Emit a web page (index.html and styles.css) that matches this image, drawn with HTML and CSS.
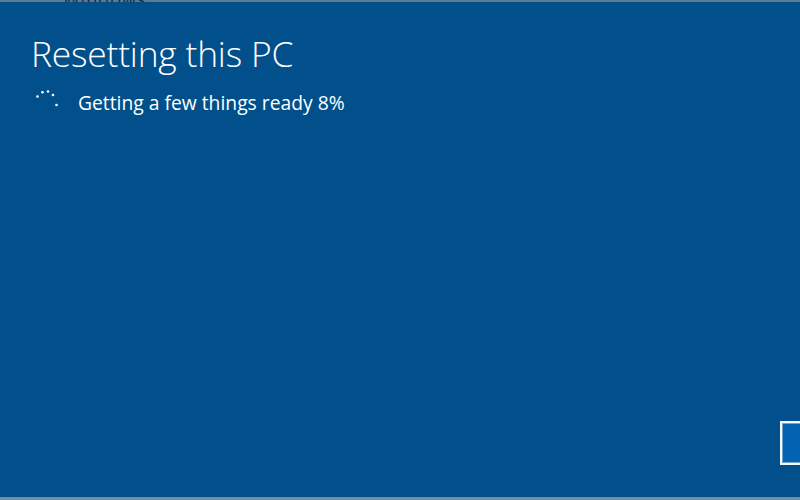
FILE: index.html
```html
<!DOCTYPE html>
<html>
<head>
<meta charset="utf-8">
<link rel="stylesheet" href="styles.css">
</head>
<body>
<div class="screen">
  <div class="topstrip"><span class="cut">Windows</span></div>
  <main class="content">
    <h1 class="title">Resetting this PC</h1>
    <div class="status">
      <svg class="spinner" width="24" height="18" viewBox="0 0 24 18">
        <circle cx="2.5" cy="6.5" r="1.3" fill="#fff"/>
        <circle cx="7.5" cy="2.2" r="1.3" fill="#fff"/>
        <circle cx="13" cy="1.5" r="1.3" fill="#fff"/>
        <circle cx="18" cy="5" r="1.3" fill="#fff"/>
        <circle cx="21.5" cy="15" r="1.3" fill="#fff"/>
      </svg>
      <span class="msg">Getting a few things ready 8%</span>
    </div>
  </main>
  <div class="footer">
    <div class="btn"></div>
  </div>
  <div class="bottomstrip"></div>
</div>
</body>
</html>
```
FILE: styles.css
```css
html, body {
  margin: 0;
  padding: 0;
  width: 800px;
  height: 500px;
  overflow: hidden;
  background: #01508b;
}
.screen {
  width: 800px;
  height: 500px;
  display: flex;
  flex-direction: column;
  background: #01508b;
  font-family: "Open Sans", "Noto Sans", sans-serif;
  color: #fff;
  position: relative;
}
.topstrip {
  height: 2px;
  background: #5f7a90;
  overflow: hidden;
  position: relative;
}
.cut {
  position: absolute;
  left: 63px;
  top: -13px;
  font-size: 18px;
  color: #1a2a3a;
  letter-spacing: 1px;
}
.content {
  flex: 1;
  padding: 0 0 0 31px;
}
.title {
  margin: 29px 0 0 0;
  font-weight: 300;
  font-size: 35.4px;
  line-height: 44px;
  letter-spacing: -0.2px;
}
.status {
  display: flex;
  align-items: flex-start;
  margin-top: 15px;
}
.spinner {
  margin-left: 4px;
  flex: none;
}
.msg {
  margin-left: 19px;
  font-size: 19.3px;
  line-height: 26px;
  margin-top: 0;
}
.footer {
  display: flex;
  justify-content: flex-end;
  padding-bottom: 32px;
}
.btn {
  width: 18px;
  height: 40px;
  border: 2px solid #f4f8fc;
  border-right: none;
  background: #0363b2;
  box-shadow: inset 1px 1px 0 #6fa3d2, inset 0 -1px 0 #6fa3d2;
}
.bottomstrip {
  height: 3px;
  background: #7a8c9a;
}
```
